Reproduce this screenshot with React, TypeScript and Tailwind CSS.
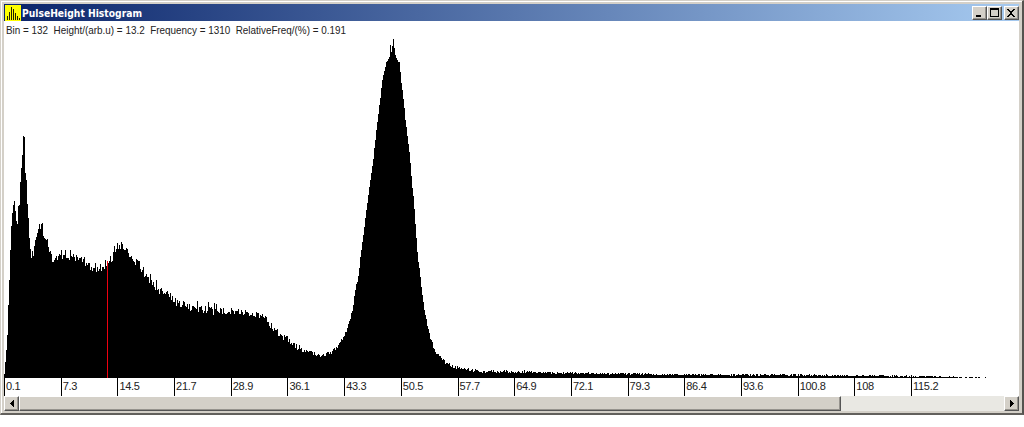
import React from "react";

const profile: [number, number][] = [
  [4, 374], [5, 362], [6, 350], [7, 335], [8, 305], [9, 280], [10, 250], [11, 226], [12, 213], [13, 205],
  [14, 201], [15, 211], [16, 221], [17, 224], [18, 206], [19, 205], [20, 182], [21, 168], [22, 155], [23, 136],
  [24, 137], [25, 173], [26, 180], [27, 204], [28, 218], [29, 238], [30, 249], [31, 258], [32, 251], [33, 256],
  [34, 246], [35, 240], [36, 237], [37, 233], [38, 229], [39, 224], [40, 229], [41, 224], [42, 223], [43, 236],
  [45, 240], [47, 246], [50, 253], [53, 260], [55, 257], [60, 257], [70, 257], [80, 258], [84, 264], [90, 267],
  [97, 270], [100, 267], [103, 270], [108, 262], [112, 257], [117, 246], [121, 245], [125, 248], [129, 253],
  [135, 261], [139, 264], [142, 272], [146, 278], [150, 280], [155, 286], [160, 291], [170, 295], [175, 301],
  [180, 304], [190, 307], [200, 308], [210, 310], [220, 311], [230, 314], [240, 313], [250, 313], [258, 315],
  [266, 319], [272, 327], [280, 334], [290, 342], [300, 349], [310, 353], [320, 355], [330, 353], [337, 348],
  [340, 342], [345, 333], [350, 319], [352, 310], [355, 290], [358, 276], [360, 258], [364, 226], [367, 202],
  [369, 187], [373, 158], [377, 122], [380, 97], [382, 81], [385, 67], [386, 62], [388, 59], [389, 57],
  [390, 45], [391, 52], [392, 46], [393, 39], [394, 48], [395, 55], [396, 58], [398, 62], [399, 62], [400, 72],
  [401, 83], [403, 100], [406, 128], [409, 152], [411, 176], [414, 208], [417, 253], [420, 278], [423, 303],
  [427, 325], [430, 338], [434, 349], [438, 356], [445, 362], [453, 367], [465, 369], [480, 371], [520, 372],
  [600, 373.5], [680, 374.5], [780, 375], [870, 375.5], [920, 376.5], [957, 377],
];

const noise = (x: number) => {
  const v = Math.sin(x * 127.1 + 31.7) * 43758.5453;
  return (v - Math.floor(v)) * 2 - 1;
};

const spread = (x: number) => {
  if (x < 44) return 0;
  if (x < 240) return 4.5;
  if (x < 300) return 3.5;
  if (x < 345) return 2.2;
  if (x < 385) return 1.5;
  if (x < 402) return 0;
  if (x < 430) return 1.5;
  if (x < 530) return 1.8;
  return 1;
};

function topAt(x: number) {
  let i = 0;
  while (i < profile.length - 2 && profile[i + 1][0] < x) i++;
  const [x0, y0] = profile[i];
  const [x1, y1] = profile[i + 1];
  const y = y0 + ((y1 - y0) * (x - x0)) / (x1 - x0);
  const n = noise(x);
  const spike = x < 240 && n < -0.85 ? 1.6 : 1;
  return Math.min(377, Math.round(y + n * spike * spread(x)));
}

const bars = Array.from({ length: 953 }, (_, i) => `M${i} ${topAt(i + 4) - 22}h1V356h-1z`).join("");

const ticks = ["0.1", "7.3", "14.5", "21.7", "28.9", "36.1", "43.3", "50.5", "57.7", "64.9", "72.1", "79.3", "86.4", "93.6", "100.8", "108", "115.2"];

const raised = "border border-t-white border-l-white border-r-[#555] border-b-[#555] bg-[#d4d0c8] shadow-[inset_-1px_-1px_0_#96938d]";

function CaptionButton({ children }: { children: React.ReactNode }) {
  return (
    <button className={`h-[14px] w-[15px] ${raised}`}>
      <svg className="block" width="13" height="12" shapeRendering="crispEdges">{children}</svg>
    </button>
  );
}

function TitleBar() {
  return (
    <header className="flex h-[17px] items-center bg-[linear-gradient(90deg,#0a246a,#a6caf0)]">
      <svg className="ml-px" width="16" height="16" shapeRendering="crispEdges">
        <path fill="#ffff00" d="M0 0h16v16H0z" />
        <path fill="#222200" d="M2 11h1v4H2zM4 7h1v8H4zM6 2h1v13H6zM8 4h1v11H8zM10 8h1v7h-1zM12 11h1v4h-1zM14 13h1v2h-1z" />
      </svg>
      <svg className="ml-px" width="200" height="16">
        <text x="0" y="12" textLength="120" lengthAdjust="spacingAndGlyphs" className="fill-white font-['DejaVu_Sans',sans-serif] text-[11px] font-bold">PulseHeight Histogram</text>
      </svg>
      <div className="ml-auto flex">
        <CaptionButton><path d="M3 8h5v2H3z" /></CaptionButton>
        <CaptionButton><path d="M2 1h9v9H2zM3 3v6h7V3z" fillRule="evenodd" /></CaptionButton>
        <span className="w-[2px]" />
        <CaptionButton><path d="M2 2h2v1h1v1h2V3h1V2h2v1H9v1H8v1H7v2h1v1h1v1h1v1H8V9H7V8H5v1H4v1H2V9h1V8h1V7h1V5H4V4H3V3H2z" /></CaptionButton>
      </div>
    </header>
  );
}

function Histogram() {
  return (
    <svg className="block" width="1015" height="356" shapeRendering="crispEdges">
      <path d={bars} />
      <path d="M953 355h1v1h-1zM955 355h3v1h-3zM961 355h2v1h-2zM965 355h4v1h-4zM971 355h2v1h-2zM974 355h2v1h-2zM981 355h1v1h-1z" />
      <rect x="103" y="239" width="1" height="117" fill="#f00010" />
      <text x="2" y="12" textLength="340" lengthAdjust="spacingAndGlyphs" xmlSpace="preserve" className="fill-[#222] font-['Liberation_Sans',sans-serif] text-[11px] whitespace-pre">Bin = 132  Height/(arb.u) = 13.2  Frequency = 1310  RelativeFreq/(%) = 0.191</text>
    </svg>
  );
}

function Axis() {
  return (
    <div className="flex h-[18px] overflow-hidden bg-white">
      {ticks.map((label) => (
        <div key={label} className="h-[18px] w-[56.7px] shrink-0 border-l border-black pl-px font-['Liberation_Sans',sans-serif] text-[11px] leading-[16px] tracking-[-0.3px] text-[#222]">
          {label}
        </div>
      ))}
    </div>
  );
}

function ScrollBar() {
  return (
    <div className="flex h-[15px] bg-[#e9e8e3]">
      <button className={`flex w-[15px] items-center justify-center ${raised}`}>
        <svg width="4" height="7" shapeRendering="crispEdges"><path d="M3 0h1v7H3zM2 1h1v5H2zM1 2h1v3H1zM0 3h1v1H0z" /></svg>
      </button>
      <div className={`w-[822px] ${raised}`} />
      <button className={`ml-auto flex w-[15px] items-center justify-center ${raised}`}>
        <svg width="4" height="7" shapeRendering="crispEdges"><path d="M0 0h1v7H0zM1 1h1v5H1zM2 2h1v3H2zM3 3h1v1H3z" /></svg>
      </button>
    </div>
  );
}

export default function App() {
  return (
    <main className="h-[427px] w-[1024px] overflow-hidden bg-white">
      <section className="h-[415px] w-[1024px] border-t border-r-2 border-b-2 border-l border-t-[#d4d0c8] border-r-[#55534f] border-b-[#62605c] border-l-[#d4d0c8] bg-[#d4d0c8]">
        <div className="h-[412px] border-t border-l border-white pt-[2px] pr-[3px] pl-[2px]">
          <TitleBar />
          <div className="bg-white pt-px">
            <Histogram />
            <Axis />
            <ScrollBar />
          </div>
        </div>
      </section>
    </main>
  );
}
